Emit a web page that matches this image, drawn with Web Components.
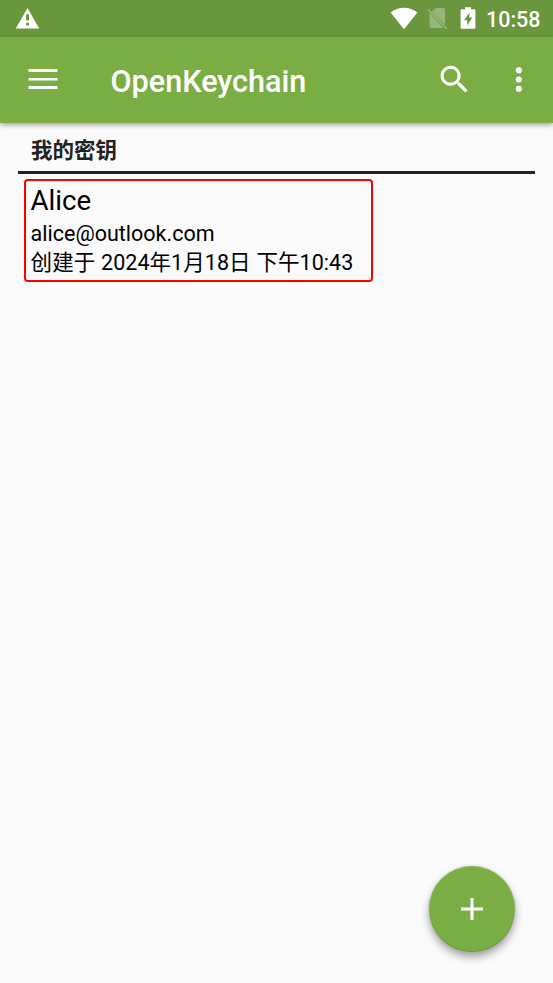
<!DOCTYPE html>
<html lang="zh-CN">
<head>
<meta charset="utf-8">
<title>OpenKeychain</title>
<style>
body { margin: 0; background: #fafafa; font-family: Roboto, "Noto Sans CJK SC", sans-serif; }
</style>
</head>
<body>
<key-app></key-app>
<script>
function define(name, html) {
  const template = document.createElement('template');
  template.innerHTML = html;
  customElements.define(name, class extends HTMLElement {
    constructor() {
      super();
      this.attachShadow({ mode: 'open' }).append(template.content.cloneNode(true));
    }
  });
}

define('status-bar', `
<style>
:host { display: flex; align-items: flex-start; height: 37px; background: #6a963d; color: #fff; box-sizing: border-box; padding: 0 12.5px 0 15px; }
svg { display: block; fill: currentColor; }
.space { flex: 1; }
.warn { margin-top: 7px; }
.wifi { margin: 7px 9px 0 0; }
.sim { margin: 7px 11px 0 0; opacity: .3; }
.battery { margin: 7px 10px 0 0; }
time { font-size: 21.5px; font-weight: 500; line-height: 26px; margin-top: 7px; }
</style>
<svg class="warn" width="25" height="22" viewBox="0 0 25 22"><path fill-rule="evenodd" d="M12.500 1 24.200 21.500H.8ZM11.100 7.200v6.300h2.900V7.200ZM11.100 15.700v2.800h2.900v-2.800Z"/></svg>
<span class="space"></span>
<svg class="wifi" width="28" height="23" viewBox="0 0 28 23"><path d="M14 22.300.6 5.400C4.500 2.300 9 .7 14 .7s9.500 1.600 13.400 4.700Z"/></svg>
<svg class="sim" width="22" height="24" viewBox="0 0 22 24"><path d="M9 1H16Q18 1 18 3V17.500L4.500 4.700ZM2.500 6 16.500 21H4.500Q2.500 21 2.500 19Z"/><path d="M.5 3.200 1.700 2.100 20.500 21.200 19.200 22.400Z"/></svg>
<svg class="battery" width="16" height="23" viewBox="0 0 16 23"><path fill-rule="evenodd" d="M5 .2h6v2h3.400q1 0 1 1v17.600q0 1-1 1H1.600q-1 0-1-1V3.200q0-1 1-1H5ZM9.600 5.500 4 13.300h3.200v5.200l5.100-7.900H9.200Z"/></svg>
<time>10:58</time>
`);

define('app-bar', `
<style>
:host { display: flex; align-items: center; height: 86px; box-sizing: border-box; padding: 0 16px 0 28px; background: #7bad45; color: #fff; box-shadow: 0 2px 5px rgba(0,0,0,.36); position: relative; }
h1 { margin: 3px 0 0 52.500px; flex: 1; font-size: 30.600px; line-height: 36px; font-weight: 500; }
svg { display: block; fill: currentColor; }
.menu { margin-top: -2px; }
.search { margin: -1px 27px 0 0; }
.more { margin-top: -1px; }
</style>
<svg class="menu" width="30" height="20" viewBox="0 0 30 20"><path d="M.5 0h29v3H.5ZM.5 9h29v2.500H.5ZM.5 17h29v3H.5Z"/></svg>
<h1><slot></slot></h1>
<svg class="search" width="37" height="37" viewBox="0 0 24 24"><path d="M15.500 14h-.79l-.28-.27C15.410 12.590 16 11.110 16 9.500 16 5.910 13.090 3 9.500 3S3 5.910 3 9.500 5.910 16 9.500 16c1.610 0 3.090-.59 4.230-1.570l.27.28v.79l5 4.990L20.490 19l-4.990-5zm-6 0C7.010 14 5 11.990 5 9.500S7.010 5 9.500 5 14 7.010 14 9.500 11.990 14 9.500 14z"/></svg>
<svg class="more" width="37" height="37" viewBox="0 0 24 24"><circle cx="12.200" cy="6" r="2"/><circle cx="12.200" cy="12" r="2"/><circle cx="12.200" cy="18" r="2"/></svg>
`);

define('section-header', `
<style>
:host { display: block; margin: 0 18.400px; padding: 13px 12.500px 5px; border-bottom: 3px solid #212121; color: #212121; font-size: 21.500px; line-height: 30px; font-weight: 700; }
</style>
<slot></slot>
`);

define('key-item', `
<style>
:host { display: block; box-sizing: border-box; width: 349px; height: 103px; margin: 5px 0 0 24px; padding: 3px 4.600px; border: 2px solid #f00; border-radius: 4px; color: #000; font-size: 21.500px; white-space: nowrap; }
.name { font-size: 27.650px; line-height: 33px; margin-bottom: 1.500px; }
.line { line-height: 29px; }
.created { word-spacing: .5px; letter-spacing: .04px; }
</style>
<div class="name"><slot name="name"></slot></div>
<div class="line"><slot name="email"></slot></div>
<div class="line created"><slot name="created"></slot></div>
`);

define('add-button', `
<style>
:host { display: flex; align-items: center; justify-content: center; width: 86px; height: 86px; border-radius: 50%; background: #7bad45; box-shadow: 0 5px 9px rgba(0,0,0,.36), 0 0 3px rgba(0,0,0,.12), inset 0 -1px 1px rgba(0,0,0,.1), inset 0 1px 1px rgba(255,255,255,.1); }
svg { display: block; fill: #fff; }
</style>
<svg width="22" height="22" viewBox="0 0 22 22"><path d="M9.500 0h3v9.500H22v3h-9.500V22h-3v-9.500H0v-3h9.500Z"/></svg>
`);

define('key-app', `
<style>
:host { display: flex; flex-direction: column; height: 983px; overflow: hidden; position: relative; }
add-button { position: absolute; right: 38.500px; bottom: 31px; }
</style>
<status-bar></status-bar>
<app-bar>OpenKeychain</app-bar>
<main>
<section-header>我的密钥</section-header>
<key-item>
<span slot="name">Alice</span>
<span slot="email">alice@outlook.com</span>
<span slot="created">创建于 2024年1月18日 下午10:43</span>
</key-item>
</main>
<add-button></add-button>
`);
</script>
</body>
</html>
